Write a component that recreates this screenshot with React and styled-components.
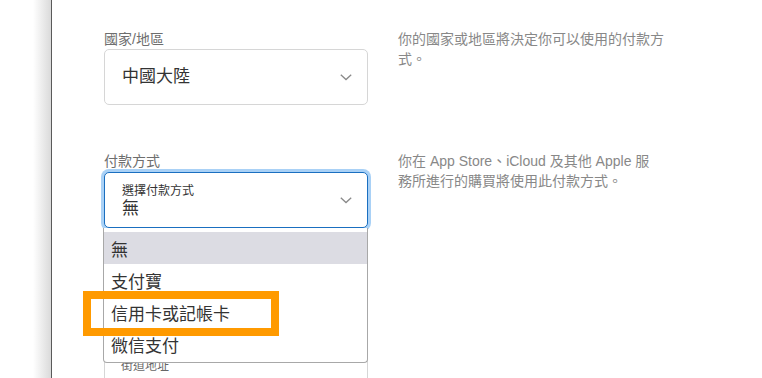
import React from "react";
import styled, { createGlobalStyle } from "styled-components";

const Global = createGlobalStyle`
  html, body { margin: 0; padding: 0; background: #fff; }
  body {
    font-family: "Liberation Sans", "Noto Sans CJK TC", sans-serif;
    overflow: hidden;
  }
`;

const Page = styled.div`
  display: flex;
  width: 762px;
  height: 378px;
  overflow: hidden;
`;

const Gutter = styled.div`
  width: 51px;
  flex: none;
  background: linear-gradient(to right, #fff 0, #fff 33px, #dadada 51px);
`;

const Panel = styled.main`
  flex: 1;
  border-left: 1px solid #5a5a5a;
  padding: 29px 0 0 52px;
  background: #fff;
`;

const Row = styled.section`
  display: grid;
  grid-template-columns: 264px 270px;
  column-gap: 30px;
  margin-top: ${(p) => p.$gap || 0}px;
`;

const Field = styled.div`
  display: flex;
  flex-direction: column;
  position: relative;
`;

const Label = styled.label`
  font-size: 14px;
  line-height: 20px;
  color: #6e6e6e;
`;

const Help = styled.p`
  margin: 0;
  font-size: 14px;
  line-height: 20px;
  color: #888;
`;

const SelectBox = styled.div`
  position: relative;
  box-sizing: border-box;
  height: 56px;
  margin-top: ${(p) => (p.$focused ? 1 : 0)}px;
  border: 1px solid ${(p) => (p.$focused ? "#1a6fc0" : "#d6d6d6")};
  border-radius: 5px;
  box-shadow: ${(p) => (p.$focused ? "0 0 0 3px #a9d1f6" : "none")};
  display: flex;
  align-items: center;
  justify-content: space-between;
  padding: 0 15px 0 17px;
  background: #fff;
`;

const Stack = styled.div`
  display: flex;
  flex-direction: column;
  padding-top: 2px;
`;

const Value = styled.span`
  font-size: 17px;
  line-height: 20px;
  color: #333;
`;

const Small = styled.span`
  font-size: 12px;
  line-height: 16px;
  color: ${(p) => p.$muted ? "#666" : "#333"};
`;

const Menu = styled.ul`
  position: absolute;
  top: 100%;
  left: -1px;
  width: 265px;
  box-sizing: border-box;
  margin: 0;
  padding: 4px 0 2px;
  list-style: none;
  background: #fff;
  border: 1px solid #a8a8a8;
  border-top: none;
  border-radius: 0 0 4px 4px;
  z-index: 2;
`;

const Item = styled.li`
  height: 32px;
  display: flex;
  align-items: center;
  padding-left: 7px;
  font-family: "Noto Sans CJK TC", sans-serif;
  font-size: 17px;
  color: #333;
  background: ${(p) => (p.$active ? "#dcdce3" : "transparent")};
`;

const Highlight = styled.div`
  position: absolute;
  left: -21px;
  top: 63px;
  width: 196px;
  height: 45px;
  box-sizing: border-box;
  border: 8px solid #ff9a00;
  pointer-events: none;
`;

const AddressBox = styled.div`
  box-sizing: border-box;
  height: 56px;
  border: 1px solid #d6d6d6;
  border-radius: 5px;
  padding: 12px 16px 0;
`;

const Chevron = () => (
  <svg width="12" height="7" viewBox="0 0 12 7" fill="none">
    <polyline points="0.8,0.8 6,5.6 11.2,0.8" stroke="#8a8a8a" strokeWidth="1.3" />
  </svg>
);

export default function App() {
  return (
    <>
      <Global />
      <Page>
        <Gutter />
        <Panel>
          <Row>
            <Field>
              <Label>國家/地區</Label>
              <SelectBox>
                <Value>中國大陸</Value>
                <Chevron />
              </SelectBox>
            </Field>
            <Help>你的國家或地區將決定你可以使用的付款方式。</Help>
          </Row>
          <Row $gap={46}>
            <Field>
              <Label>付款方式</Label>
              <SelectBox $focused>
                <Stack>
                  <Small>選擇付款方式</Small>
                  <Value>無</Value>
                </Stack>
                <Chevron />
              </SelectBox>
              <Menu>
                <Item $active>無</Item>
                <Item>支付寶</Item>
                <Item>信用卡或記帳卡</Item>
                <Item>微信支付</Item>
                <Highlight />
              </Menu>
            </Field>
            <Help>
              你在 App Store、iCloud 及其他 Apple 服<br />
              務所進行的購買將使用此付款方式。
            </Help>
          </Row>
          <Row $gap={115}>
            <AddressBox>
              <Small $muted>街道地址</Small>
            </AddressBox>
          </Row>
        </Panel>
      </Page>
    </>
  );
}
